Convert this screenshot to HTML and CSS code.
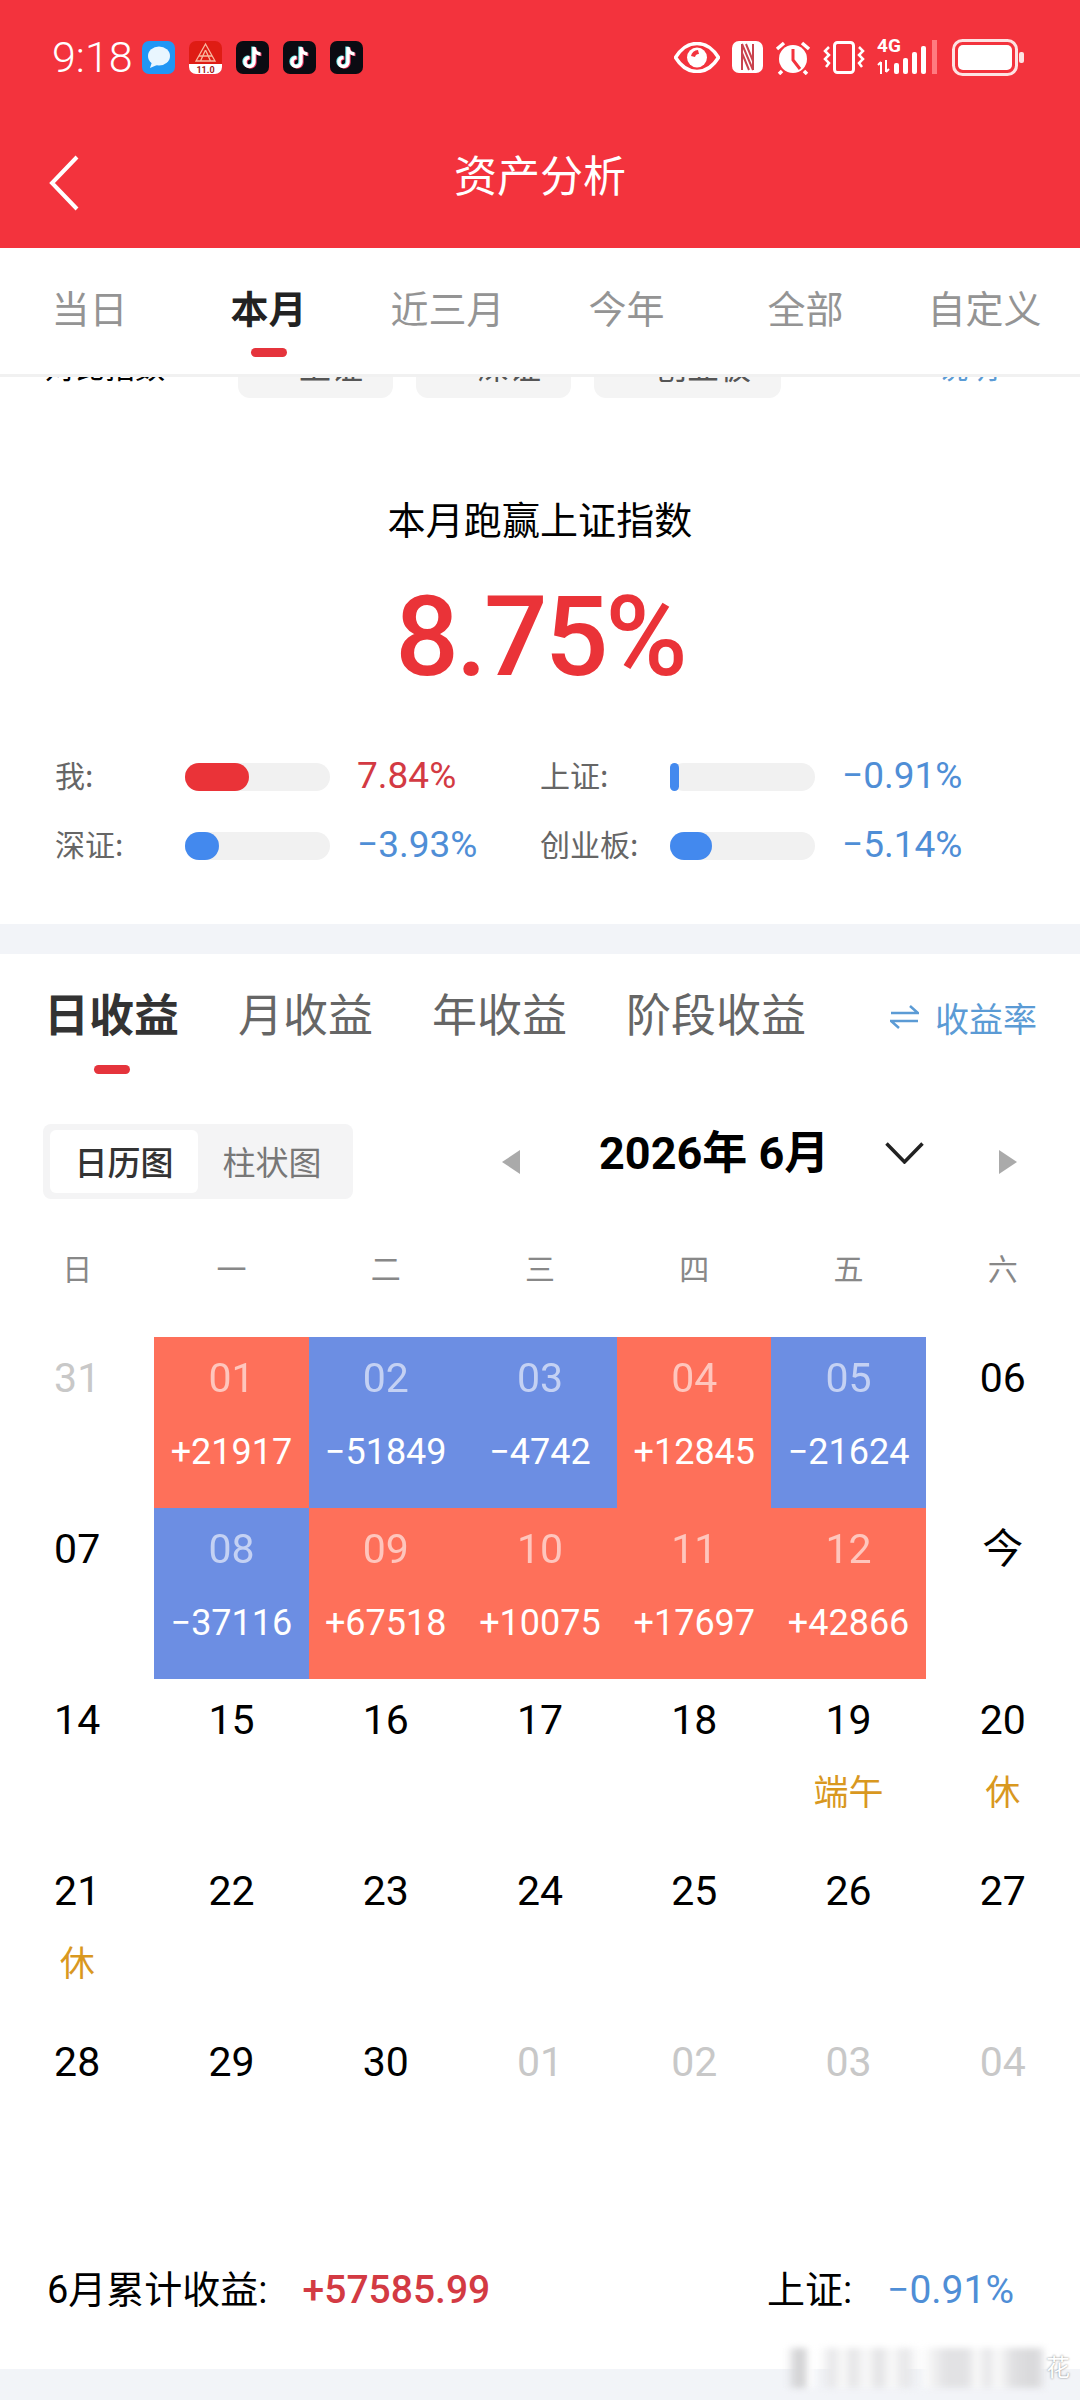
FILE: index.html
```html
<!DOCTYPE html>
<html lang="zh-CN">
<head>
  <meta charset="UTF-8" />
  <title>资产分析</title>
  <link rel="stylesheet" href="styles.css">
</head>
<body>
  <header class="app-head">
    <div class="status-bar">
      <span class="clock">9:18</span>
      <div class="app-icons">
        <svg class="app-icon" viewBox="0 0 33 33"><rect width="33" height="33" rx="7" fill="#2196f5"/><ellipse cx="17" cy="15" rx="11" ry="9.5" fill="#e9f6ff"/><path d="M10 21l-2 6 7-3z" fill="#e9f6ff"/></svg>
        <svg class="app-icon" viewBox="0 0 33 33"><rect width="33" height="33" rx="7" fill="#df1c14"/><path d="M0 23h33v3a7 7 0 0 1-7 7H7a7 7 0 0 1-7-7z" fill="#fff"/><path d="M16.500 3L7 20h19zM16.500 9l-5 11M16.500 9l5 11M10 15h13" fill="none" stroke="#f8b8a0" stroke-width="1.300"/><text x="16.500" y="31.500" class="app-ver">11.0</text></svg>
        <svg class="app-icon" viewBox="0 0 33 33"><use href="#tiktok"/></svg>
        <svg class="app-icon" viewBox="0 0 33 33"><use href="#tiktok"/></svg>
        <svg class="app-icon" viewBox="0 0 33 33"><use href="#tiktok"/></svg>
      </div>
      <div class="sys-icons">
        <svg class="sys-eye" viewBox="0 0 46 31"><path d="M1.500 15.500C8 5 15 1.500 23 1.500S38 5 44.500 15.500C38 26 31 29.500 23 29.500S8 26 1.500 15.500z" fill="none" stroke="#fff" stroke-width="3.500"/><circle cx="23" cy="15.500" r="10" fill="#fff"/><path d="M17 14a7 7 0 0 1 7-6l1 4a4 4 0 0 0-4 3z" fill="#f3333d"/></svg>
        <svg class="sys-nfc" viewBox="0 0 31 32"><rect width="31" height="32" rx="7" fill="#fff"/><path d="M10 3v26M21 3v26M10 3l11 26M14 3l7 17M10 12l7 17" fill="none" stroke="#c9434e" stroke-width="2"/></svg>
        <svg class="sys-alarm" viewBox="0 0 36 35"><circle cx="18" cy="19" r="14" fill="#fff"/><path d="M18 9v11l7 9" fill="none" stroke="#f3333d" stroke-width="3"/><path d="M2 9l7-6M34 9l-7-6M7 31l-3 3M29 31l3 3" stroke="#fff" stroke-width="3.500" fill="none"/></svg>
        <svg class="sys-vibrate" viewBox="0 0 42 33"><rect x="11.500" y="1.500" width="19" height="30" rx="3" fill="none" stroke="#fff" stroke-width="3"/><path d="M6 6L2 10l4 4-4 4 4 4-3 4M36 6l4 4-4 4 4 4-4 4 3 4" fill="none" stroke="#fff" stroke-width="2.500"/></svg>
        <div class="sys-signal">
          <span class="net-label">4G</span>
          <svg class="signal-bars" viewBox="0 0 62 34"><path d="M4 34V22M1 25l3-3M9 20v12M12 29l-3 3" stroke="#fff" stroke-width="2" fill="none"/><rect x="17" y="23" width="5" height="11" rx="2" fill="#fff"/><rect x="26" y="18" width="5" height="16" rx="2" fill="#fff"/><rect x="35" y="12" width="5" height="22" rx="2" fill="#fff"/><rect x="44" y="6" width="5" height="28" rx="2" fill="#fff"/><rect x="55" y="0" width="5" height="34" fill="#ff7a80"/></svg>
        </div>
        <svg class="sys-battery" viewBox="0 0 72 37"><rect x="1.500" y="1.500" width="63" height="34" rx="9" fill="none" stroke="#fde3e3" stroke-width="3"/><rect x="6" y="6" width="54" height="25" rx="5" fill="#fff"/><rect x="67" y="13" width="5" height="11" rx="2" fill="#fde3e3"/></svg>
      </div>
    </div>
    <div class="nav-bar">
      <svg class="back-icon" viewBox="0 0 30 56"><path d="M28 2L3 28l25 26" fill="none" stroke="#fff" stroke-width="4"/></svg>
      <h1 class="nav-title">资产分析</h1>
    </div>
  </header>

  <nav class="range-tabs">
    <a class="range-tab">当日</a>
    <a class="range-tab active">本月</a>
    <a class="range-tab">近三月</a>
    <a class="range-tab">今年</a>
    <a class="range-tab">全部</a>
    <a class="range-tab">自定义</a>
  </nav>

  <main class="content">
    <div class="index-filter">
      <span class="filter-label">对比指数</span>
      <span class="filter-chip"><i class="chip-dot"></i>上证</span>
      <span class="filter-chip"><i class="chip-dot"></i>深证</span>
      <span class="filter-chip"><i class="chip-dot"></i>创业板</span>
      <span class="filter-more">说明 ›</span>
    </div>

    <section class="summary">
      <h2 class="summary-title">本月跑赢上证指数</h2>
      <div class="summary-pct">8.75%</div>
      <div class="stats">
        <div class="stat"><span class="stat-name">我:</span><span class="stat-track"><i class="stat-fill up" style="width:64px"></i></span><span class="stat-val up">7.84%</span></div>
        <div class="stat"><span class="stat-name">上证:</span><span class="stat-track"><i class="stat-fill down" style="width:9px"></i></span><span class="stat-val down">−0.91%</span></div>
        <div class="stat"><span class="stat-name">深证:</span><span class="stat-track"><i class="stat-fill down" style="width:34px"></i></span><span class="stat-val down">−3.93%</span></div>
        <div class="stat"><span class="stat-name">创业板:</span><span class="stat-track"><i class="stat-fill down" style="width:42px"></i></span><span class="stat-val down">−5.14%</span></div>
      </div>
    </section>

    <section class="income">
      <div class="income-tabs">
        <a class="income-tab active">日收益</a>
        <a class="income-tab">月收益</a>
        <a class="income-tab">年收益</a>
        <a class="income-tab">阶段收益</a>
        <a class="rate-link"><svg class="rate-icon" viewBox="0 0 29 26"><path d="M1 9h27L20 2M28 17H1l8 7" fill="none" stroke="#5b9bd5" stroke-width="2.500"/></svg>收益率</a>
      </div>

      <div class="toolbar">
        <div class="view-switch">
          <span class="view-opt active">日历图</span>
          <span class="view-opt">柱状图</span>
        </div>
        <div class="month-nav">
          <svg class="month-arrow" viewBox="0 0 18 24"><path d="M18 0v24L0 12z" fill="#aaa"/></svg>
          <span class="month-title">2026年 6月</span>
          <svg class="month-chevron" viewBox="0 0 39 22"><path d="M1.500 1.500L19.500 20l18-18.500" fill="none" stroke="#222" stroke-width="3.500"/></svg>
          <svg class="month-arrow" viewBox="0 0 18 24"><path d="M0 0v24l18-12z" fill="#aaa"/></svg>
        </div>
      </div>

      <div class="weekdays">
        <span>日</span><span>一</span><span>二</span><span>三</span><span>四</span><span>五</span><span>六</span>
      </div>

      <div class="calendar">
        <div class="day muted"><span class="day-num">31</span></div>
        <div class="day gain"><span class="day-num">01</span><span class="day-val">+21917</span></div>
        <div class="day loss"><span class="day-num">02</span><span class="day-val">−51849</span></div>
        <div class="day loss"><span class="day-num">03</span><span class="day-val">−4742</span></div>
        <div class="day gain"><span class="day-num">04</span><span class="day-val">+12845</span></div>
        <div class="day loss"><span class="day-num">05</span><span class="day-val">−21624</span></div>
        <div class="day"><span class="day-num">06</span></div>

        <div class="day"><span class="day-num">07</span></div>
        <div class="day loss"><span class="day-num">08</span><span class="day-val">−37116</span></div>
        <div class="day gain"><span class="day-num">09</span><span class="day-val">+67518</span></div>
        <div class="day gain"><span class="day-num">10</span><span class="day-val">+10075</span></div>
        <div class="day gain"><span class="day-num">11</span><span class="day-val">+17697</span></div>
        <div class="day gain"><span class="day-num">12</span><span class="day-val">+42866</span></div>
        <div class="day"><span class="day-num">今</span></div>

        <div class="day"><span class="day-num">14</span></div>
        <div class="day"><span class="day-num">15</span></div>
        <div class="day"><span class="day-num">16</span></div>
        <div class="day"><span class="day-num">17</span></div>
        <div class="day"><span class="day-num">18</span></div>
        <div class="day"><span class="day-num">19</span><span class="day-note">端午</span></div>
        <div class="day"><span class="day-num">20</span><span class="day-note">休</span></div>

        <div class="day"><span class="day-num">21</span><span class="day-note">休</span></div>
        <div class="day"><span class="day-num">22</span></div>
        <div class="day"><span class="day-num">23</span></div>
        <div class="day"><span class="day-num">24</span></div>
        <div class="day"><span class="day-num">25</span></div>
        <div class="day"><span class="day-num">26</span></div>
        <div class="day"><span class="day-num">27</span></div>

        <div class="day"><span class="day-num">28</span></div>
        <div class="day"><span class="day-num">29</span></div>
        <div class="day"><span class="day-num">30</span></div>
        <div class="day muted"><span class="day-num">01</span></div>
        <div class="day muted"><span class="day-num">02</span></div>
        <div class="day muted"><span class="day-num">03</span></div>
        <div class="day muted"><span class="day-num">04</span></div>
      </div>

      <div class="month-total">
        <span>6月累计收益:</span><span class="total-val up">+57585.99</span>
        <span class="total-index">上证:</span><span class="total-val down">−0.91%</span>
      </div>
    </section>

    <div class="bottom-band"></div>
  </main>

  <div class="watermark"><i class="smudge"></i><span class="smudge-end">花</span></div>

  <svg class="defs" width="0" height="0">
    <defs>
      <g id="tiktok">
        <rect width="33" height="33" rx="7" fill="#0b0b12"/>
        <path d="M18 6v15a4.500 4.500 0 1 1-4.500-4.500M18 7c.5 3.500 3 6 6.500 6" fill="none" stroke="#5fe6ee" stroke-width="3.400" transform="translate(-1 -.5)"/>
        <path d="M18 6v15a4.500 4.500 0 1 1-4.500-4.500M18 7c.5 3.500 3 6 6.500 6" fill="none" stroke="#f0305a" stroke-width="3.400" transform="translate(1 .5)"/>
        <path d="M18 6v15a4.500 4.500 0 1 1-4.500-4.500M18 7c.5 3.500 3 6 6.500 6" fill="none" stroke="#fff" stroke-width="3.400"/>
      </g>
    </defs>
  </svg>
</body>
</html>
```

FILE: styles.css
```css
* {
  box-sizing: border-box;
}

body {
  position: relative;
  display: flex;
  flex-direction: column;
  width: 1080px;
  height: 2400px;
  margin: 0;
  overflow: hidden;
  background: #fff;
  color: #000;
  font-family: Roboto, "Noto Sans CJK SC", sans-serif;
}

.up { color: #d33a43; }
.down { color: #4f8ed6; }

/* status bar + title */
.app-head {
  background: #f3333d;
  color: #fff;
}

.status-bar {
  display: flex;
  align-items: center;
  height: 114px;
  padding: 0 56px 0 52px;
}

.clock {
  width: 90px;
  font-size: 43px;
  font-weight: 300;
}

.app-icons {
  display: flex;
  gap: 14px;
}

.app-icon {
  width: 33px;
  height: 33px;
}

.app-ver {
  font-size: 9px;
  font-weight: 700;
  fill: #a02020;
  text-anchor: middle;
}

.sys-icons {
  display: flex;
  align-items: center;
  margin-left: auto;
}

.sys-eye { width: 46px; height: 31px; margin-right: 12px; }
.sys-nfc { width: 31px; height: 32px; margin-right: 12px; }
.sys-alarm { width: 36px; height: 35px; margin-right: 12px; }
.sys-vibrate { width: 42px; height: 33px; margin-right: 12px; }
.sys-battery { width: 72px; height: 37px; }

.sys-signal {
  position: relative;
  width: 62px;
  height: 34px;
  margin-right: 13px;
}

.net-label {
  position: absolute;
  top: -4px;
  left: 0;
  font-size: 19px;
  font-weight: 700;
  line-height: 20px;
}

.signal-bars {
  display: block;
  width: 62px;
  height: 34px;
}

.nav-bar {
  position: relative;
  display: flex;
  justify-content: center;
  align-items: center;
  height: 134px;
  padding-bottom: 8px;
}

.back-icon {
  position: absolute;
  top: 41px;
  left: 49px;
  width: 30px;
  height: 56px;
}

.nav-title {
  margin: 0;
  font-size: 43px;
  font-weight: 400;
  line-height: 60px;
}

/* range tabs */
.range-tabs {
  display: grid;
  grid-template-columns: repeat(6, 1fr);
  height: 129px;
  padding: 37px 6px 0 0;
  border-bottom: 3px solid #f1f1f1;
  background: #fff;
}

.range-tab {
  display: flex;
  flex-direction: column;
  align-items: center;
  color: #949494;
  font-size: 38px;
  line-height: 50px;
}

.range-tab.active {
  color: #222;
  font-weight: 700;
}

.range-tab.active::after {
  content: "";
  width: 36px;
  height: 9px;
  margin-top: 13px;
  border-radius: 5px;
  background: #e5343c;
}

.content {
  display: flex;
  flex: 1;
  flex-direction: column;
  min-height: 0;
  overflow: hidden;
}

/* row that is scrolled almost out of view under the tabs */
.index-filter {
  display: flex;
  flex: none;
  align-items: center;
  gap: 23px;
  height: 60px;
  margin-top: -39px;
  padding: 0 65px 0 45px;
  font-size: 30px;
}

.filter-label {
  width: 170px;
  padding-bottom: 6px;
}

.filter-chip {
  display: flex;
  align-items: center;
  gap: 13px;
  height: 60px;
  padding: 0 30px 6px 28px;
  border-radius: 12px;
  background: #f4f4f4;
  color: #555;
  font-size: 32px;
}

.chip-dot {
  width: 20px;
  height: 20px;
  border: 2px solid #999;
  border-radius: 50%;
}

.filter-more {
  margin-left: auto;
  padding-bottom: 6px;
  color: #5b9bd5;
}

/* outperformance summary */
.summary {
  flex: none;
  padding: 98px 0 56px;
  border-bottom: 30px solid #f2f4f8;
}

.summary-title {
  margin: 0;
  font-size: 38px;
  font-weight: 400;
  line-height: 50px;
  text-align: center;
  letter-spacing: .1px;
}

.summary-pct {
  margin-top: 26px;
  color: #ea3338;
  font-size: 112px;
  font-weight: 500;
  line-height: 130px;
  letter-spacing: -3px;
  text-align: center;
}

.stats {
  display: grid;
  grid-template-columns: 485px 1fr;
  row-gap: 25px;
  margin-top: 53px;
  padding-left: 55px;
}

.stat {
  display: flex;
  align-items: center;
  height: 44px;
}

.stat-name {
  width: 130px;
  padding-bottom: 6px;
  color: #666;
  font-family: "Noto Sans CJK SC", sans-serif;
  font-size: 30px;
  line-height: 44px;
}

.stat-track {
  display: block;
  width: 145px;
  height: 28px;
  margin-right: 27px;
  border-radius: 14px;
  background: #f1f1f1;
}

.stat-fill {
  display: block;
  height: 28px;
  border-radius: 14px;
}

.stat-fill.up { background: #ea3338; }
.stat-fill.down { background: #4389ee; }

.stat-val {
  padding-bottom: 3px;
  font-size: 37px;
}

/* income section */
.income {
  flex: none;
}

.income-tabs {
  display: flex;
  align-items: flex-start;
  gap: 59px;
  padding: 33px 43px 0 44px;
}

.income-tab {
  display: flex;
  flex-direction: column;
  align-items: center;
  color: #666;
  font-size: 45px;
  line-height: 60px;
}

.income-tab.active {
  color: #333;
  font-weight: 700;
}

.income-tab.active::after {
  content: "";
  width: 36px;
  height: 9px;
  margin-top: 18px;
  border-radius: 5px;
  background: #e5343c;
}

.rate-link {
  display: flex;
  align-items: center;
  gap: 16px;
  height: 60px;
  margin-left: auto;
  color: #5b9bd5;
  font-size: 34px;
}

.rate-icon {
  width: 29px;
  height: 26px;
}

.toolbar {
  display: flex;
  align-items: center;
  justify-content: space-between;
  margin-top: 50px;
  padding: 0 63px 0 43px;
}

.view-switch {
  display: flex;
  align-items: center;
  width: 310px;
  height: 75px;
  padding: 6px 7px;
  border-radius: 8px;
  background: #f4f4f5;
}

.view-opt {
  display: flex;
  flex: 1;
  justify-content: center;
  align-items: center;
  height: 63px;
  color: #777;
  font-family: "Noto Sans CJK SC", sans-serif;
  font-size: 33px;
  line-height: 63px;
}

.view-opt.active {
  flex: none;
  width: 148px;
  border-radius: 6px;
  background: #fff;
  color: #333;
  font-weight: 500;
}

.month-nav {
  display: flex;
  align-items: center;
}

.month-arrow {
  width: 18px;
  height: 24px;
}

.month-title {
  width: 227px;
  margin-left: 79px;
  padding-bottom: 16px;
  font-size: 45px;
  font-weight: 700;
  line-height: 48px;
  white-space: nowrap;
}

.month-chevron {
  width: 39px;
  height: 22px;
  margin: 0 75px 18px 59px;
}

.weekdays {
  display: grid;
  grid-template-columns: repeat(7, 1fr);
  margin-top: 51px;
  color: #888;
  font-size: 30px;
  line-height: 40px;
  text-align: center;
}

/* calendar */
.calendar {
  display: grid;
  grid-template-columns: repeat(7, 1fr);
  grid-auto-rows: 171px;
  margin-top: 47px;
}

.day {
  display: flex;
  flex-direction: column;
  align-items: center;
  padding-top: 21px;
}

.day-num {
  font-size: 41px;
  line-height: 40px;
}

.day.muted .day-num { color: #c8c8c8; }

.day.gain { background: #fe705a; color: #fff; }
.day.loss { background: #6c8ee3; color: #fff; }
.day.gain .day-num,
.day.loss .day-num { opacity: .6; }

.day-val {
  margin-top: 34px;
  font-size: 36px;
  line-height: 40px;
}

.day-note {
  margin-top: 34px;
  color: #d9981f;
  font-size: 35px;
  line-height: 40px;
}

.month-total {
  display: flex;
  align-items: center;
  gap: 35px;
  margin-top: 73px;
  padding: 0 66px 0 47px;
  font-size: 38px;
  line-height: 50px;
}

.total-val {
  font-size: 39px;
}

.total-val.up {
  font-weight: 500;
}

.total-index {
  margin-left: auto;
}

.bottom-band {
  flex: 1;
  margin-top: 54px;
  background: #f2f4f8;
}

/* blurred-out watermark burnt into the screenshot */
.watermark {
  position: absolute;
  right: 10px;
  bottom: 12px;
  display: flex;
  align-items: center;
  gap: 2px;
}

.smudge {
  width: 258px;
  height: 40px;
  background: linear-gradient(90deg,
    transparent 0, #d4d4d6 4%, #d4d4d6 7%, #fff 9%, transparent 13%,
    #e6e6e8 18%, #fafafa 22%, #e4e4e6 26%, #fafafa 31%, #e2e2e4 36%, #fafafa 41%, #e6e6e8 46%,
    transparent 52%, #fafafa 54%, #e2e2e4 62%, #e2e2e4 70%, #fafafa 74%,
    #e6e6e8 78%, #fafafa 82%, #e0e0e2 88%, #d8d8da 96%, #e8e8ea 100%);
  filter: blur(3px);
}

.smudge-end {
  color: #fff;
  font-size: 24px;
  line-height: 28px;
  text-shadow: 0 0 2px rgba(0,0,0,.55);
}

.defs {
  position: absolute;
}
```
